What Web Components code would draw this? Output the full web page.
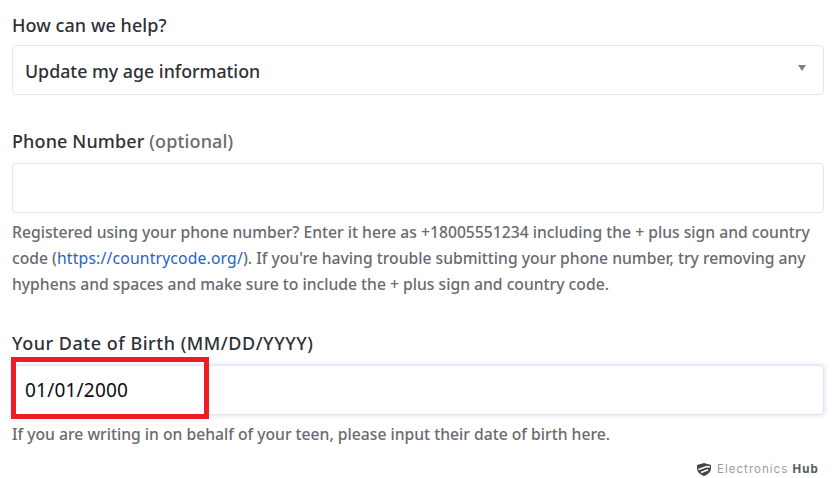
<!DOCTYPE html>
<html>
<head>
<meta charset="utf-8">
<style>
  html, body { margin: 0; background: #fff; }
  body { font-family: "Noto Sans", "Open Sans", sans-serif; color: #2f3037; width: 836px; height: 478px; overflow: hidden; }
</style>
</head>
<body>
<help-form>
  <form-field label="How can we help?" style="--gap-top:13px;--label-gap:8px">
    <select-box>Update my age information</select-box>
  </form-field>
  <form-field label="Phone Number" note="(optional)" style="--gap-top:34px;--label-gap:10px;--label-track:.13px">
    <text-box></text-box>
    <help-text>Registered using your phone number? Enter it here as +18005551234 including the + plus sign and country code (<a href="#" style="color:#1f62c8;text-decoration:none;font-weight:400;letter-spacing:.18px">https://countrycode.org/</a>). If you're having trouble submitting your phone number, try removing any hyphens and spaces and make sure to include the + plus sign and country code.</help-text>
  </form-field>
  <form-field label="Your Date of Birth (MM/DD/YYYY)" style="--gap-top:34px;--label-gap:10px;--label-track:.52px">
    <text-box focused marked>01/01/2000</text-box>
    <help-text>If you are writing in on behalf of your teen, please input their date of birth here.</help-text>
  </form-field>
  <brand-mark></brand-mark>
</help-form>

<script>
  class HelpForm extends HTMLElement {
    constructor() {
      super();
      this.attachShadow({ mode: "open" });
      this.shadowRoot.innerHTML = `
        <style>
          :host { display: flex; flex-direction: column; padding: 0 12px; position: relative; height: 478px; box-sizing: border-box; }
        </style>
        <slot></slot>`;
    }
  }

  class FormField extends HTMLElement {
    constructor() {
      super();
      this.attachShadow({ mode: "open" });
      const note = this.getAttribute("note");
      this.shadowRoot.innerHTML = `
        <style>
          :host { display: block; padding-top: var(--gap-top, 0); }
          .label { display: block; font-size: 18px; font-weight: 500; line-height: 24px; margin-bottom: var(--label-gap, 8px); letter-spacing: var(--label-track, .06px); color: #2f3037; }
          .note { color: #6a6a72; }
        </style>
        <span class="label">${this.getAttribute("label")}${note ? ` <span class="note">${note}</span>` : ""}</span>
        <slot></slot>`;
    }
  }

  class SelectBox extends HTMLElement {
    constructor() {
      super();
      this.attachShadow({ mode: "open" });
      this.shadowRoot.innerHTML = `
        <style>
          :host { display: flex; align-items: center; justify-content: space-between; height: 50px; box-sizing: border-box; padding: 0 17px 0 12px; border: 1px solid #e3e6ea; border-radius: 4px; font-size: 17.8px; font-weight: 500; color: #2f3037; }
          span { padding-top: 1px; }
          svg { display: block; margin-top: -4px; }
        </style>
        <span><slot></slot></span>
        <svg width="8" height="6" viewBox="0 0 8 6"><path d="M0 0h8L4 6z" fill="#7f8083"/></svg>`;
    }
  }

  class TextBox extends HTMLElement {
    constructor() {
      super();
      this.attachShadow({ mode: "open" });
      this.shadowRoot.innerHTML = `
        <style>
          :host { display: flex; align-items: center; position: relative; height: 50px; box-sizing: border-box; padding: 0 12px; border: 1px solid #e3e6ea; border-radius: 4px; font-size: 19px; letter-spacing: .2px; color: #0c0c12; }
          :host([focused]) { border-color: #dfe5f5; box-shadow: 0 0 5px rgba(90, 120, 220, .28); }
          .mark { display: none; position: absolute; left: -2px; top: -9px; width: 198px; height: 62px; box-sizing: border-box; border: 5px solid #ee1c25; }
          :host([marked]) .mark { display: block; }
        </style>
        <span><slot></slot></span>
        <span class="mark"></span>`;
    }
  }

  class HelpText extends HTMLElement {
    constructor() {
      super();
      this.attachShadow({ mode: "open" });
      this.shadowRoot.innerHTML = `
        <style>
          :host { display: block; padding-top: 6px; font-size: 15.7px; font-weight: 500; line-height: 26px; color: #6a6a70; }
        </style>
        <slot></slot>`;
    }
  }

  class BrandMark extends HTMLElement {
    constructor() {
      super();
      this.attachShadow({ mode: "open" });
      this.shadowRoot.innerHTML = `
        <style>
          :host { position: absolute; left: 696px; top: 461px; display: flex; align-items: center; gap: 5px; font-family: Inter, sans-serif; font-size: 11.5px; letter-spacing: 1.03px; color: #9a9ea1; line-height: 16px; }
          b { color: #555a5e; font-weight: 700; }
        </style>
        <svg width="16" height="15" viewBox="0 0 16 15"><path d="M1 3 8 1l7 2v3c0 4-3 6.500-7 8-4-1.500-7-4-7-8z" fill="#41474b"/><path d="M2.500 7.500 11 4.500l3 .5M5 10.500l7-2.800" stroke="#fff" stroke-width="1.500" fill="none"/></svg>
        <span>Electronics <b>Hub</b></span>`;
    }
  }

  customElements.define("help-form", HelpForm);
  customElements.define("form-field", FormField);
  customElements.define("select-box", SelectBox);
  customElements.define("text-box", TextBox);
  customElements.define("help-text", HelpText);
  customElements.define("brand-mark", BrandMark);
</script>
</body>
</html>
